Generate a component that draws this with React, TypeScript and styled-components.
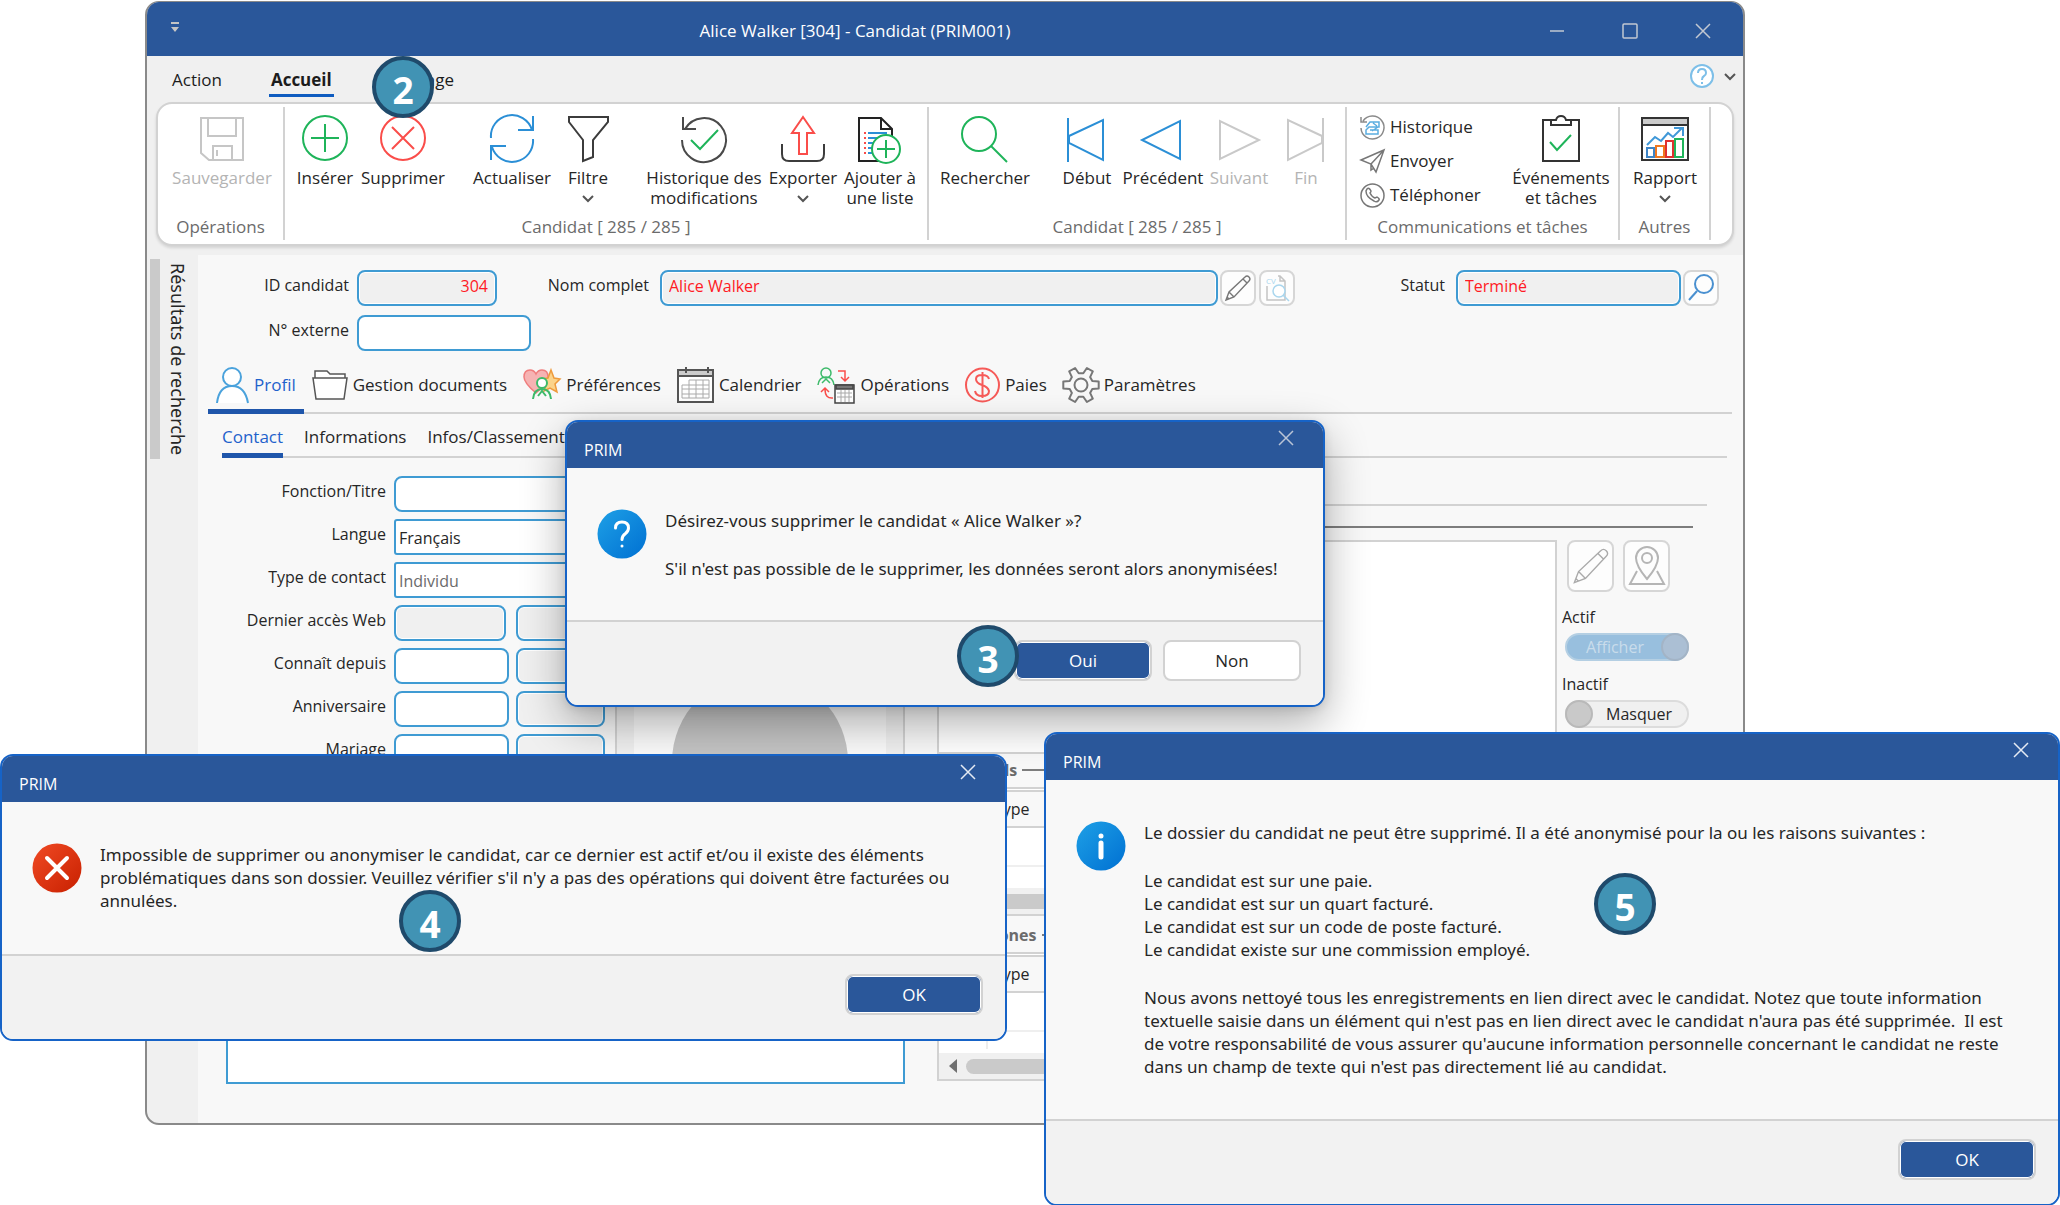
import React from "react";
import styled, { createGlobalStyle } from "styled-components";

const c = {
  title: "#2a579a",
  accent: "#0f5cc0",
  field: "#3f9bd3",
  text: "#262626",
  mute: "#6b6b6b",
  off: "#b4b4b4",
  rule: "#d2d2d2",
  page: "#f8f8f8",
  chrome: "#f0f0f0",
  blue: "#2b8fd6",
  green: "#1fb45a",
  red: "#fa4d4a",
};

const Global = createGlobalStyle`
  *, *::before, *::after { box-sizing: border-box; }
  body { margin: 0; background: #fff; color: ${c.text}; font: 16px/20px "Open Sans", "Noto Sans", sans-serif; }
  button, input, select, textarea { font: inherit; color: inherit; margin: 0; }
  button { border: 0; background: none; padding: 0; }
  svg { display: block; fill: none; flex: none; overflow: visible; }
`;

const Desktop = styled.div`
  position: relative;
  min-height: 1205px;
  overflow: hidden;
  padding: 1px 315px 0 145px;
`;

/* ---------- main window ---------- */
const Window = styled.main`
  border: 2px solid #8a8a8a;
  border-top-width: 1px;
  border-radius: 14px;
  background: ${c.chrome};
  overflow: hidden;
`;
const TitleBar = styled.header`
  display: flex;
  align-items: center;
  height: 54px;
  padding-right: 4px;
  background: ${c.title};
  color: #fff;
`;
const QuickMenu = styled.button`
  width: 55px;
  display: flex;
  justify-content: center;
  padding-bottom: 4px;
`;
const WindowTitle = styled.h1`
  flex: 1;
  margin: 0;
  padding: 4px 12px 0 0;
  font-size: 17px;
  font-weight: 400;
  text-align: center;
  white-space: nowrap;
`;
const Caption = styled.button`
  width: 73px;
  display: flex;
  justify-content: center;
  padding-top: 4px;
`;
const RibbonTabs = styled.nav`
  display: flex;
  align-items: flex-start;
  gap: 45px;
  height: 46px;
  padding: 0 7px 0 23px;
`;
const RibbonTab = styled.button<{ $on?: boolean }>`
  padding: 14px 2px 4px;
  border-bottom: 3px solid ${(p) => (p.$on ? c.accent : "transparent")};
  font-size: 17px;
  font-weight: ${(p) => (p.$on ? 700 : 400)};
  color: #1c1c1c;
`;
const Help = styled.div`
  margin-left: auto;
  padding-top: 8px;
  display: flex;
  align-items: center;
  gap: 10px;
`;
const Ribbon = styled.section`
  display: flex;
  margin: 0 9px;
  padding: 3px 0 4px;
  background: #fff;
  border: 2px solid ${c.rule};
  border-radius: 16px;
  box-shadow: 0 2px 3px rgba(0, 0, 0, 0.12);
  font-size: 17px;
`;
const Group = styled.div<{ $w: number }>`
  flex: 0 1 ${(p) => p.$w}px;
  border-right: 2px solid ${c.rule};
  display: flex;
  flex-direction: column;
  justify-content: space-between;
  height: 133px;
  min-width: 0;
`;
const Tools = styled.div<{ $pad?: number }>`
  display: flex;
  align-items: flex-start;
  padding-left: ${(p) => p.$pad ?? 0}px;
`;
const GroupName = styled.div`
  text-align: center;
  color: ${c.mute};
  padding-bottom: 3px;
  white-space: nowrap;
`;
const Tool = styled.button<{ $w: number; $gap?: number }>`
  flex: none;
  width: ${(p) => p.$w}px;
  margin-left: ${(p) => p.$gap ?? 0}px;
  padding-top: 8px;
  display: flex;
  flex-direction: column;
  align-items: center;
  line-height: 20px;
  white-space: nowrap;
  &:disabled { color: ${c.off}; }
  > svg { margin-bottom: 5px; }
  > svg + svg { margin: 7px 0 0; }
`;
const SmallTools = styled.div`
  width: 150px;
  padding: 3px 0 0 13px;
`;
const SmallTool = styled.button`
  display: flex;
  align-items: center;
  gap: 5px;
  height: 34px;
`;

/* ---------- body ---------- */
const Body = styled.div`
  display: flex;
  margin-top: 9px;
`;
const Rail = styled.aside`
  flex: none;
  width: 51px;
  display: flex;
  align-items: flex-start;
  gap: 4px;
  padding: 4px 0 0 3px;
`;
const RailHandle = styled.div`
  width: 10px;
  height: 200px;
  background: #cacaca;
`;
const RailText = styled.div`
  writing-mode: vertical-rl;
  font-family: "Noto Sans", sans-serif;
  font-size: 18px;
  line-height: 28px;
  padding-top: 4px;
  white-space: nowrap;
`;
const Content = styled.div`
  flex: 1;
  min-width: 0;
  background: ${c.page};
  padding: 15px 11px 39px 10px;
`;
const HeaderRow = styled.div`
  display: flex;
  align-items: center;
  margin-right: 13px;
  & + & { margin-top: 9px; }
`;
const Label = styled.label<{ $w?: number; $pad?: number }>`
  width: ${(p) => p.$w ?? 0}px;
  flex: none;
  text-align: right;
  white-space: nowrap;
  padding: 0 ${(p) => p.$pad ?? 8}px 6px 0;
`;
const Field = styled.input<{ $w?: number; $ro?: boolean }>`
  height: 36px;
  min-width: 0;
  ${(p) => (p.$w ? `flex: none; width: ${p.$w}px;` : "flex: 1;")}
  border: 2px solid ${c.field};
  border-radius: 8px;
  padding: 0 7px 4px;
  background: ${(p) => (p.$ro ? c.chrome : "#fff")};
  box-shadow: inset 0 0 0 1px #fff;
  color: #ff1a24;
`;
const NumberField = styled(Field)`text-align: right;`;
const Choice = styled.select`
  appearance: none;
  height: 36px;
  width: 211px;
  border: 2px solid ${c.field};
  border-radius: 3px;
  padding: 2px 3px 0;
  background: #fff;
  opacity: 1;
  &:disabled { color: ${c.mute}; }
`;
const IconButton = styled.button<{ $w?: number; $h?: number; $gap?: number }>`
  flex: none;
  width: ${(p) => p.$w ?? 36}px;
  height: ${(p) => p.$h ?? 36}px;
  margin-left: ${(p) => p.$gap ?? 2}px;
  background: #fdfdfd;
  border: 2px solid #d6d6d6;
  border-radius: 8px;
  display: flex;
  align-items: center;
  justify-content: center;
`;
const Tabs = styled.nav`
  display: flex;
  margin-top: 9px;
  height: 54px;
  box-shadow: inset 0 -2px 0 ${c.rule};
`;
const Tab = styled.button<{ $on?: boolean }>`
  display: flex;
  align-items: center;
  gap: 5px;
  white-space: nowrap;
  font-size: 17px;
  padding: 0 8px;
  color: ${(p) => (p.$on ? "#1f62cc" : c.text)};
  border-bottom: 5px solid ${(p) => (p.$on ? "#1f56ab" : "transparent")};
`;
const SubTabs = styled(Tabs)`
  margin: 0 5px 0 14px;
  height: 44px;
  gap: 21px;
`;
const SubTab = styled(Tab)`padding: 6px 0 0;`;
const Panels = styled.div`
  display: flex;
  gap: 32px;
  padding: 18px 25px 0 18px;
`;
const Left = styled.div`
  flex: none;
  width: 679px;
  display: flex;
  flex-direction: column;
  justify-content: space-between;
`;
const LeftTop = styled.div`
  display: flex;
  justify-content: space-between;
`;
const Form = styled.div`
  width: 380px;
  display: grid;
  gap: 7px;
`;
const FormRow = styled.div`
  display: flex;
  align-items: center;
`;
const Spacer = styled.span<{ $w: number }>`
  width: ${(p) => p.$w}px;
  flex: none;
`;
const Photo = styled.div`
  width: 290px;
  padding: 0 17px;
  border: 2px solid ${c.rule};
  background: #f0f0f0;
`;
const PhotoInner = styled.div`
  height: 100%;
  background: #fafafa;
  display: flex;
  align-items: flex-end;
  justify-content: center;
  overflow: hidden;
`;
const Notes = styled.textarea`
  height: 214px;
  width: 100%;
  border: 2px solid ${c.field};
  resize: none;
  display: block;
`;
const Right = styled.div`
  flex: 1;
  min-width: 0;
  padding-top: 28px;
`;
const Rule = styled.hr<{ $dark?: boolean }>`
  height: 2px;
  border: 0;
  margin: 0 ${(p) => (p.$dark ? 14 : 0)}px ${(p) => (p.$dark ? 12 : 20)}px 0;
  background: ${(p) => (p.$dark ? "#7d7d7d" : c.rule)};
`;
const Split = styled.div`
  display: flex;
  gap: 5px;
`;
const Address = styled.div`
  flex: 1;
  height: 214px;
  background: #fff;
  border: 2px solid ${c.rule};
`;
const Side = styled.div`
  width: 145px;
`;
const SideButtons = styled.div`
  display: flex;
  margin: 0 0 15px 3px;
`;
const SwitchBox = styled.label<{ $on?: boolean }>`
  display: flex;
  flex-direction: ${(p) => (p.$on ? "row-reverse" : "row")};
  align-items: center;
  width: 124px;
  height: 28px;
  margin: 6px 0 13px 3px;
  border: 2px solid ${(p) => (p.$on ? "#b4cfe3" : "#dcdcdc")};
  border-radius: 14px;
  background: ${(p) => (p.$on ? "#98bfde" : "#f0f0f0")};
  color: ${(p) => (p.$on ? "#c9dceb" : c.text)};
  span { flex: 1; text-align: center; }
  input {
    appearance: none;
    flex: none;
    width: 28px;
    height: 28px;
    margin: -2px;
    border: 2px solid ${(p) => (p.$on ? "#a3b4c6" : "#b9b9b9")};
    border-radius: 50%;
    background: ${(p) => (p.$on ? "#abbfd4" : "#c9c9c9")};
  }
`;
const ListTitle = styled.h2`
  display: flex;
  align-items: center;
  gap: 5px;
  height: 33px;
  margin: 0;
  padding: 0 0 2px 8px;
  font-size: 16px;
  color: ${c.mute};
  &::after { content: ""; flex: 1; height: 2px; background: #7d7d7d; }
`;
const ListBox = styled.div`
  height: 129px;
  margin: 0 149px 3px 0;
  border: 2px solid ${c.rule};
  padding-top: 1px;
  background: #fff;
  display: flex;
  flex-direction: column;
  justify-content: space-between;
`;
const Table = styled.table`
  border-collapse: collapse;
  width: 100%;
  table-layout: fixed;
  th, td { text-align: left; padding: 0 0 0 7px; font-weight: 400; border-right: 2px solid #ededed; }
  th { height: 36px; background: ${c.page}; border: 0; border-top: 2px solid ${c.rule}; border-bottom: 2px solid ${c.rule}; }
  td { height: 39px; border-bottom: 2px solid #efefef; }
  tr + tr td { height: 18px; border-bottom: 0; }
  th:first-child { width: 48px; }
`;
const ScrollTrack = styled.div`
  flex: none;
  display: flex;
  align-items: center;
  gap: 9px;
  height: 26px;
  background: ${c.chrome};
  padding: 0 10px;
`;
const Thumb = styled.div`
  flex: 1;
  height: 15px;
  border-radius: 8px;
  background: #cacaca;
`;

/* ---------- dialogs ---------- */
const Dialog = styled.section<{ $x: number; $y: number; $w: number; $lift?: boolean }>`
  position: absolute;
  left: ${(p) => p.$x}px;
  top: ${(p) => p.$y}px;
  width: ${(p) => p.$w}px;
  border: 2px solid #1663c7;
  border-radius: 13px;
  overflow: hidden;
  background: ${c.page};
  ${(p) => p.$lift && "box-shadow: 0 16px 44px rgba(0,0,0,.32), 0 2px 10px rgba(0,0,0,.1);"}
`;
const DialogTitle = styled.header`
  display: flex;
  justify-content: space-between;
  height: 46px;
  background: ${c.title};
  color: #fff;
  padding: 0 29px 0 17px;
  h2 { margin: 0; padding-top: 18px; font-size: 16px; font-weight: 400; }
  button { align-self: flex-start; padding-top: 8px; }
`;
const DialogBody = styled.div<{ $h: number }>`
  display: flex;
  gap: 18px;
  min-height: ${(p) => p.$h}px;
  padding: 41px 0 0 30px;
`;
const DialogText = styled.div`
  font-family: "Noto Sans", "Open Sans", sans-serif;
  font-size: 17px;
  line-height: 23px;
  display: grid;
  align-content: start;
  gap: 25px;
  white-space: pre;
  p { margin: 0; }
`;
const DialogFoot = styled.footer`
  display: flex;
  justify-content: flex-end;
  gap: 11px;
  border-top: 2px solid ${c.rule};
  background: #f2f2f2;
  padding: 18px 22px 24px;
`;
const DialogButton = styled.button<{ $primary?: boolean }>`
  width: 138px;
  height: 41px;
  border: 2px solid ${c.rule};
  border-radius: 8px;
  font-size: 17px;
  background: ${(p) => (p.$primary ? c.title : "#fff")};
  color: ${(p) => (p.$primary ? "#fff" : c.text)};
  box-shadow: ${(p) => (p.$primary ? "inset 0 0 0 1px #fff" : "none")};
`;
const Step = styled.div<{ $x: number; $y: number }>`
  position: absolute;
  left: ${(p) => p.$x}px;
  top: ${(p) => p.$y}px;
  width: 62px;
  height: 62px;
  padding-top: 5px;
  border: 4px solid #1f4a6b;
  border-radius: 50%;
  background: #4193b4;
  color: #fff;
  display: flex;
  align-items: center;
  justify-content: center;
  font-size: 37px;
  font-weight: 700;
`;

/* ---------- drawings ---------- */
const Svg = ({ w = 48, h = 48, s = c.text, sw = 2, children }: { w?: number; h?: number; s?: string; sw?: number; children: React.ReactNode }) => (
  <svg width={w} height={h} viewBox={`0 0 ${w} ${h}`} stroke={s} strokeWidth={sw} aria-hidden="true">{children}</svg>
);
const Chevron = () => <Svg w={12} h={7} s="#555"><path d="M1 1l5 5 5-5" /></Svg>;
const Close = ({ s = "#e4eaf3" }: { s?: string }) => <Svg w={16} h={16} s={s} sw={1.5}><path d="M1 1l14 14M15 1L1 15" /></Svg>;

const SaveIcon = () => <Svg s="#c6c6c6"><path d="M3 3h42v42H11l-8-7zM10 3v18h28V3M15 45V31h19v14M19 35v6" /></Svg>;
const AddIcon = () => <Svg s={c.green}><circle cx="24" cy="23" r="22" /><path d="M24 9v28M10 23h28" /></Svg>;
const DeleteIcon = () => <Svg s={c.red}><circle cx="24" cy="23" r="22" /><path d="M13 12l22 22M35 12L13 34" /></Svg>;
const RefreshIcon = () => <Svg s={c.blue}><path d="M3 23A21 21 0 0 1 44 15M45 1v14H30M45 24A21 21 0 0 1 4 32M3 45V31h15" /></Svg>;
const FilterIcon = () => <Svg s="#3c3c3c"><path d="M5 2h39v5L29 25v17l-10 4V25L5 7z" /></Svg>;
const HistoryIcon = () => (
  <Svg s="#4a4a4a"><path d="M5 14A22 22 0 1 1 2 25M3 2v12h13" /><path d="M11 25l9 9 18-19" stroke={c.green} /></Svg>
);
const ExportIcon = () => (
  <Svg s="#3c3c3c"><path d="M3 29v10q0 7 7 7h28q7 0 7-7V29" /><path d="M24 2l11 16h-7v21h-8V18h-7z" stroke={c.red} /></Svg>
);
const ListAddIcon = () => (
  <Svg s="#222"><path d="M3 3h22l11 11v32H3zM25 3v11h11" />
    <path d="M12 18h19M12 23h16M12 28h10M12 33h8M12 38h8" stroke={c.blue} />
    <path d="M8 18h2M8 23h2M8 28h2M8 33h2M8 38h2" stroke={c.red} />
    <circle cx="30" cy="34" r="14" fill="#fff" stroke={c.green} /><path d="M30 25v18M21 34h18" stroke={c.green} /></Svg>
);
const SearchIcon = () => <Svg s={c.green}><circle cx="18" cy="19" r="17" /><path d="M30 31l16 16" /></Svg>;
const FirstIcon = () => <Svg s={c.blue}><path d="M5 3v44M40 5v40L6 28v-7z" /></Svg>;
const PrevIcon = () => <Svg s={c.blue}><path d="M41 6v38L3 25z" /></Svg>;
const NextIcon = () => <Svg s="#c9c9c9"><path d="M5 6v38l39-19z" /></Svg>;
const LastIcon = () => <Svg s="#c9c9c9"><path d="M41 3v44M6 5v40l34-17v-7z" /></Svg>;
const MailHistoryIcon = () => (
  <Svg w={25} h={25} s="#8a8a8a" sw={1.5}><path d="M3 6A11.500 11.500 0 1 1 1 13M1 2v5h6" /><path d="M6 12l4-5h9v5H9l-3 3v4h12v-4h-8M13 8l4 3M12 16l6-4" stroke="#5aade0" /></Svg>
);
const SendIcon = () => <Svg w={25} h={25} s="#777" sw={1.5}><path d="M1 11L24 1l-8 22-5-8zM24 1L11 15v6l3-2" /></Svg>;
const PhoneIcon = () => (
  <Svg w={25} h={25} s="#777" sw={1.5}><circle cx="12.500" cy="12.500" r="11.500" /><path d="M7 6q2-2 4 2 0 1-1 2 2 4 5 5l2-1q3 2 2 3-2 3-5 1-8-4-8-10z" /></Svg>
);
const TasksIcon = () => (
  <Svg s="#333"><path d="M14 5H6v41h36V5h-8M14 5v5h20V5h-5q-1-4-5-4t-5 4z" /><path d="M13 27l7 8 14-15" stroke={c.green} /></Svg>
);
const ReportIcon = () => (
  <Svg s="#333"><rect x="1" y="3" width="46" height="42" /><path d="M2 4h44v6H2z" fill="#ccc" stroke="none" /><path d="M1 10h46" />
    <path d="M6 30l8-8 6 4 7-8 5 4 9-9M33 13h9v8" stroke="#4098d8" />
    <path d="M6 33h7v9H6z" stroke="#3d85c8" /><path d="M15 31h8v11h-8z" stroke="#f07820" /><path d="M25 26h7v16h-7z" stroke="#e03030" /><path d="M34 24h8v18h-8z" stroke={c.green} /></Svg>
);
const PencilIcon = ({ size = 26, s = "#777" }: { size?: number; s?: string }) => (
  <svg width={size} height={size} viewBox="0 0 26 26" stroke={s} strokeWidth={36 / size} aria-hidden="true">
    <path d="M1 25l3-8L20 2q2-2 4 0t0 4L9 22zM4 17l5 5M18 4l4 4M2 22l2 2" />
  </svg>
);
const CvIcon = () => (
  <Svg w={26} h={28} s="#c4c4c4" sw={1.5}><path d="M14 2h2l5 5v19H3V12M16 2v5h5" /><circle cx="15" cy="17" r="6" stroke="#a9d6ee" fill="#fff" /><path d="M19 21l6 6" stroke="#a9d6ee" />
    <text x="2" y="10" fontSize="8" fill="#a9d6ee" stroke="none">CV</text></Svg>
);
const LookupIcon = () => <Svg w={26} h={28} s="#4a90d0"><circle cx="16" cy="10" r="9" /><path d="M9 17l-8 9" /></Svg>;
const PinIcon = () => (
  <Svg w={38} h={40} s="#b5b5b5"><path d="M19 33Q8 20 8 12a11 11 0 0 1 22 0q0 8-11 21z" /><circle cx="19" cy="12" r="5" /><path d="M9 25L2 38h34l-7-13" /></Svg>
);
const PersonIcon = () => <Svg w={33} h={38} s="#4aa2dc"><circle cx="16" cy="11" r="9" fill="#fff" /><path d="M1 37q2-17 15-17t16 17" fill="#fff" /></Svg>;
const FolderIcon = () => (
  <Svg w={36} h={34} s="#555" sw={1.5}><path d="M3 10V3h12l3 3h15v4" fill="#fff" /><path d="M1 10h34l-3 21H4z" fill="#fff" /></Svg>
);
const HeartIcon = () => (
  <Svg w={38} h={34} sw={1.5}><path d="M13 25Q1 15 1 9q0-7 6-7 4 0 6 4 2-4 6-4 6 0 6 7 0 6-12 16z" fill="#f6b3b3" stroke="#ef7d7d" />
    <path d="M28 2l3 8 6 1-5 5 2 8-7-4-6 3 2-7-5-5 7-1z" fill="#fbd38a" stroke="#ee9a3c" />
    <circle cx="19" cy="15" r="5" fill="#fff" stroke="#3dba6a" strokeWidth="2" /><path d="M10 31q1-10 9-10t9 10M15 28l4-5 4 5" stroke="#3dba6a" strokeWidth="2" /></Svg>
);
const CalendarIcon = ({ w = 37, h = 37 }: { w?: number; h?: number }) => (
  <svg width={w} height={h} viewBox="0 0 37 37" stroke="#555" strokeWidth="2" aria-hidden="true">
    <path d="M1 4h35v32H1z" fill="#fff" /><path d="M2 5h33v5H2z" fill="#ccc" stroke="none" /><path d="M1 10h35M9 1v6M31 1v6" />
    <path d="M12 14h20v18H5V19h27M5 23h27M5 28h27M12 14v18M19 14v18M26 14v18" stroke="#aaa" strokeWidth="1" />
  </svg>
);
const OperationsIcon = () => (
  <Svg w={38} h={38} s="#3dba6a" sw={1.5}><circle cx="9" cy="7" r="5" /><path d="M1 19q1-8 8-8t8 8M5 17l4-4 4 4" />
    <path d="M21 5h7v9M24 11l4 4 4-4M16 32q-8 1-8-9M4 26l4-4 4 4" stroke={c.red} />
    <g stroke="#444"><path d="M18 19h19v18H18z" fill="#fff" /><path d="M19 19h17v4H19z" fill="#777" /><path d="M20 27h15M20 31h15M24 24v12M28 24v12M32 24v12" stroke="#aaa" strokeWidth="1" /></g></Svg>
);
const PayIcon = () => (
  <Svg w={35} h={36} s="#f65a58"><circle cx="17.500" cy="18" r="16.500" /><path d="M24 12q-1-4-7-4t-6 4q0 4 6 6t7 6q0 5-7 5-6 0-7-5M17.500 5v26" /></Svg>
);
const gear = Array.from({ length: 6 }, (_, i) => {
  const at = (r: number, d: number) => {
    const a = ((i * 60 + d) * Math.PI) / 180;
    return `${(18 + r * Math.cos(a)).toFixed(1)} ${(18 + r * Math.sin(a)).toFixed(1)}`;
  };
  return `${at(12, -19)} L${at(18, -11)} L${at(18, 11)} L${at(12, 19)}`;
}).join(" L");
const GearIcon = () => <Svg w={36} h={36} s="#777"><path d={`M${gear}Z`} strokeLinejoin="round" /><circle cx="18" cy="18" r="6.500" /></Svg>;

const Status = ({ kind }: { kind: "ask" | "error" | "info" }) => (
  <svg width="50" height="50" viewBox="0 0 50 50" stroke="#fff" strokeWidth="4" strokeLinecap="round" aria-hidden="true">
    <defs><linearGradient id={kind} x1="0" y1="0" x2="1" y2="1">
      <stop offset="0" stopColor={kind === "error" ? "#f04a24" : "#1ea0e6"} /><stop offset="1" stopColor={kind === "error" ? "#c82000" : "#0070d2"} />
    </linearGradient></defs>
    <circle cx="25" cy="25" r="24.500" fill={`url(#${kind})`} stroke="none" />
    {kind === "error" && <path d="M15 15l20 20M35 15L15 35" />}
    {kind === "info" && <path d="M25 22v14M25 15v0" strokeWidth="5" />}
    {kind === "ask" && <path d="M18.500 19q0-6 6.500-6t6.500 6q0 3-3 5.500-3.500 2.500-3.500 6M25 37v0" strokeWidth="3" />}
  </svg>
);

const DialogHeader = ({ dim }: { dim?: boolean }) => (
  <DialogTitle><h2>PRIM</h2><button aria-label="Fermer"><Close s={dim ? "#b9c4d6" : undefined} /></button></DialogTitle>
);
const ListTable = ({ title }: { title: string }) => (
  <>
    <ListTitle>{title}</ListTitle>
    <ListBox>
      <Table>
        <thead><tr><th aria-label="Choix" /><th>Type</th></tr></thead>
        <tbody><tr><td /><td /></tr><tr><td /><td /></tr></tbody>
      </Table>
      <ScrollTrack><Svg w={8} h={14} s="none"><path d="M8 0v14L0 7z" fill="#707070" /></Svg><Thumb /></ScrollTrack>
    </ListBox>
  </>
);

const dates = [
  { id: "web", label: "Dernier accès Web", w: 112, gap: 10, ro: true },
  { id: "connu", label: "Connaît depuis", w: 115, gap: 7 },
  { id: "anniv", label: "Anniversaire", w: 115, gap: 7 },
  { id: "mariage", label: "Mariage", w: 115, gap: 7 },
];

export default function App() {
  return (
    <Desktop>
      <Global />
      <Window>
        <TitleBar>
          <QuickMenu aria-label="Personnaliser"><Svg w={10} h={11} s="none"><path d="M1 0h8v2H1zM1 5h8L5 10z" fill="#c4c4c4" /></Svg></QuickMenu>
          <WindowTitle>Alice Walker [304] - Candidat (PRIM001)</WindowTitle>
          <Caption aria-label="Réduire"><Svg w={16} h={16} s="#c2c8d2" sw={1.5}><path d="M1 8h14" /></Svg></Caption>
          <Caption aria-label="Agrandir"><Svg w={16} h={16} s="#c2c8d2" sw={1.5}><rect x="1" y="1" width="14" height="14" rx="1" /></Svg></Caption>
          <Caption aria-label="Fermer"><Close s="#c2c8d2" /></Caption>
        </TitleBar>
        <RibbonTabs>
          <RibbonTab>Action</RibbonTab>
          <RibbonTab $on>Accueil</RibbonTab>
          <RibbonTab>Affichage</RibbonTab>
          <Help>
            <Svg w={24} h={24} s="#7dbfe8"><circle cx="12" cy="12" r="11" fill="#fff" /><path d="M8 9q0-4 4-4t4 4q0 2-2 3t-2 4M12 18v2" /></Svg>
            <Chevron />
          </Help>
        </RibbonTabs>
        <Ribbon>
          <Group $w={127}>
            <Tools $pad={8}><Tool $w={112} disabled><SaveIcon />Sauvegarder</Tool></Tools>
            <GroupName>Opérations</GroupName>
          </Group>
          <Group $w={644}>
            <Tools $pad={8}>
              <Tool $w={64}><AddIcon />Insérer</Tool>
              <Tool $w={92}><DeleteIcon />Supprimer</Tool>
              <Tool $w={96} $gap={15}><RefreshIcon />Actualiser</Tool>
              <Tool $w={56}><FilterIcon />Filtre<Chevron /></Tool>
              <Tool $w={132} $gap={22}><HistoryIcon /><span>Historique des<br />modifications</span></Tool>
              <Tool $w={66}><ExportIcon />Exporter<Chevron /></Tool>
              <Tool $w={80} $gap={4}><ListAddIcon /><span>Ajouter à<br />une liste</span></Tool>
            </Tools>
            <GroupName>Candidat [ 285 / 285 ]</GroupName>
          </Group>
          <Group $w={418}>
            <Tools $pad={6}>
              <Tool $w={100}><SearchIcon />Rechercher</Tool>
              <Tool $w={64} $gap={20}><FirstIcon />Début</Tool>
              <Tool $w={88}><PrevIcon />Précédent</Tool>
              <Tool $w={64} disabled><NextIcon />Suivant</Tool>
              <Tool $w={64} $gap={3} disabled><LastIcon />Fin</Tool>
            </Tools>
            <GroupName>Candidat [ 285 / 285 ]</GroupName>
          </Group>
          <Group $w={273}>
            <Tools>
              <SmallTools>
                <SmallTool><MailHistoryIcon />Historique</SmallTool>
                <SmallTool><SendIcon />Envoyer</SmallTool>
                <SmallTool><PhoneIcon />Téléphoner</SmallTool>
              </SmallTools>
              <Tool $w={104} $gap={12}><TasksIcon /><span>Événements<br />et tâches</span></Tool>
            </Tools>
            <GroupName>Communications et tâches</GroupName>
          </Group>
          <Group $w={91}>
            <Tools $pad={5}><Tool $w={80}><ReportIcon />Rapport<Chevron /></Tool></Tools>
            <GroupName>Autres</GroupName>
          </Group>
        </Ribbon>
        <Body>
          <Rail><RailHandle /><RailText>Résultats de recherche</RailText></Rail>
          <Content>
            <HeaderRow>
              <Label htmlFor="id" $w={149}>ID candidat</Label>
              <NumberField id="id" $w={140} $ro readOnly defaultValue="304" />
              <Label htmlFor="nom" $w={163} $pad={11}>Nom complet</Label>
              <Field id="nom" $ro readOnly defaultValue="Alice Walker" />
              <IconButton aria-label="Modifier"><PencilIcon /></IconButton>
              <IconButton $gap={3} aria-label="Voir le CV"><CvIcon /></IconButton>
              <Label htmlFor="statut" $w={161} $pad={11}>Statut</Label>
              <Field id="statut" $w={225} $ro readOnly defaultValue="Terminé" />
              <IconButton aria-label="Chercher"><LookupIcon /></IconButton>
            </HeaderRow>
            <HeaderRow>
              <Label htmlFor="ext" $w={149}>N° externe</Label>
              <Field id="ext" $w={174} />
            </HeaderRow>
            <Tabs>
              <Tab $on><PersonIcon />Profil</Tab>
              <Tab><FolderIcon />Gestion documents</Tab>
              <Tab><HeartIcon />Préférences</Tab>
              <Tab><CalendarIcon />Calendrier</Tab>
              <Tab><OperationsIcon />Opérations</Tab>
              <Tab><PayIcon />Paies</Tab>
              <Tab><GearIcon />Paramètres</Tab>
            </Tabs>
            <SubTabs>
              <SubTab $on>Contact</SubTab>
              <SubTab>Informations</SubTab>
              <SubTab>Infos/Classement</SubTab>
            </SubTabs>
            <Panels>
              <Left>
                <LeftTop>
                  <Form>
                    <FormRow><Label htmlFor="titre" $w={168}>Fonction/Titre</Label><Field id="titre" $w={211} /></FormRow>
                    <FormRow><Label htmlFor="langue" $w={168}>Langue</Label><Choice id="langue"><option>Français</option></Choice></FormRow>
                    <FormRow><Label htmlFor="type" $w={168}>Type de contact</Label><Choice id="type" disabled><option>Individu</option></Choice></FormRow>
                    {dates.map((d) => (
                      <FormRow key={d.id}>
                        <Label htmlFor={d.id} $w={168}>{d.label}</Label>
                        <Field id={d.id} $w={d.w} $ro={d.ro} readOnly={d.ro} />
                        <Spacer $w={d.gap} />
                        <Field aria-label={`${d.label} (détail)`} $w={89} $ro readOnly />
                      </FormRow>
                    ))}
                  </Form>
                  <Photo><PhotoInner><Svg w={176} h={94} s="none"><circle cx="88" cy="88" r="88" fill="#c4c4c4" /></Svg></PhotoInner></Photo>
                </LeftTop>
                <Notes aria-label="Notes" />
              </Left>
              <Right>
                <Rule />
                <Rule $dark />
                <Split>
                  <Address />
                  <Side>
                    <SideButtons>
                      <IconButton $w={47} $h={52} aria-label="Modifier l'adresse"><PencilIcon size={36} s="#aaa" /></IconButton>
                      <IconButton $w={47} $h={52} $gap={9} aria-label="Carte"><PinIcon /></IconButton>
                    </SideButtons>
                    Actif
                    <SwitchBox $on><input type="checkbox" defaultChecked disabled /><span>Afficher</span></SwitchBox>
                    Inactif
                    <SwitchBox><input type="checkbox" /><span>Masquer</span></SwitchBox>
                  </Side>
                </Split>
                <ListTable title="Courriels" />
                <ListTable title="Téléphones" />
              </Right>
            </Panels>
          </Content>
        </Body>
      </Window>

      <Dialog $x={565} $y={420} $w={760} $lift role="dialog" aria-label="Confirmation">
        <DialogHeader dim />
        <DialogBody $h={152}>
          <Status kind="ask" />
          <DialogText>
            <p>Désirez-vous supprimer le candidat « Alice Walker »?</p>
            <p>S'il n'est pas possible de le supprimer, les données seront alors anonymisées!</p>
          </DialogText>
        </DialogBody>
        <DialogFoot><DialogButton $primary>Oui</DialogButton><DialogButton>Non</DialogButton></DialogFoot>
      </Dialog>

      <Dialog $x={0} $y={754} $w={1007} role="dialog" aria-label="Erreur">
        <DialogHeader />
        <DialogBody $h={152}>
          <Status kind="error" />
          <DialogText>
            <p>{"Impossible de supprimer ou anonymiser le candidat, car ce dernier est actif et/ou il existe des éléments\nproblématiques dans son dossier. Veuillez vérifier s'il n'y a pas des opérations qui doivent être facturées ou\nannulées."}</p>
          </DialogText>
        </DialogBody>
        <DialogFoot><DialogButton $primary>OK</DialogButton></DialogFoot>
      </Dialog>

      <Dialog $x={1044} $y={732} $w={1016} role="dialog" aria-label="Information">
        <DialogHeader />
        <DialogBody $h={339}>
          <Status kind="info" />
          <DialogText>
            <p>Le dossier du candidat ne peut être supprimé. Il a été anonymisé pour la ou les raisons suivantes :</p>
            <p>{"Le candidat est sur une paie.\nLe candidat est sur un quart facturé.\nLe candidat est sur un code de poste facturé.\nLe candidat existe sur une commission employé."}</p>
            <p>{"Nous avons nettoyé tous les enregistrements en lien direct avec le candidat. Notez que toute information\ntextuelle saisie dans un élément qui n'est pas en lien direct avec le candidat n'aura pas été supprimée.  Il est\nde votre responsabilité de vous assurer qu'aucune information personnelle concernant le candidat ne reste\ndans un champ de texte qui n'est pas directement lié au candidat."}</p>
          </DialogText>
        </DialogBody>
        <DialogFoot><DialogButton $primary>OK</DialogButton></DialogFoot>
      </Dialog>

      <Step $x={372} $y={56}>2</Step>
      <Step $x={957} $y={625}>3</Step>
      <Step $x={399} $y={890}>4</Step>
      <Step $x={1594} $y={873}>5</Step>
    </Desktop>
  );
}
